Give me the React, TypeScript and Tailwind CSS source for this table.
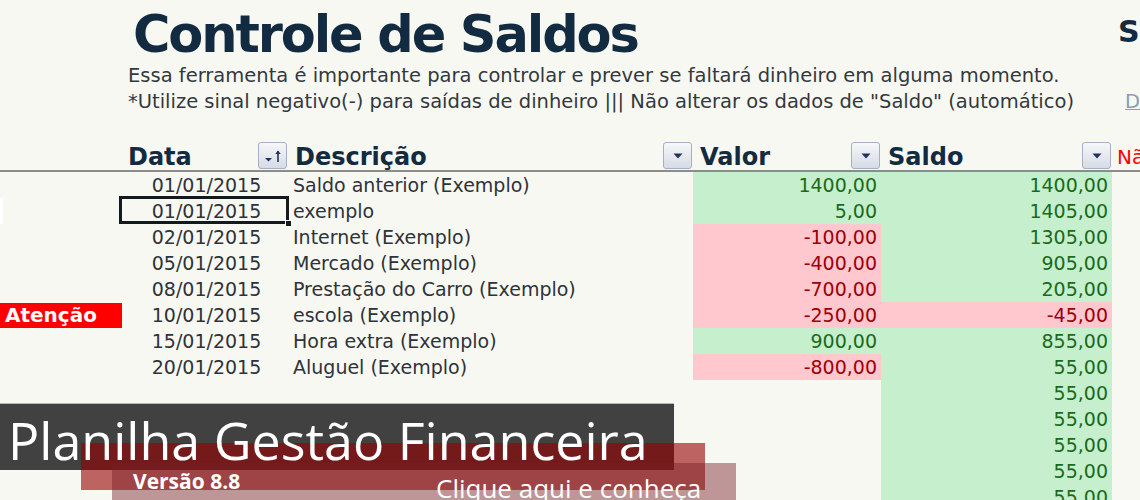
type Row = {
  date?: string;
  desc?: string;
  valor?: string;
  saldo: string;
  selected?: boolean;
  alert?: boolean;
  mark?: boolean;
};

const rows: Row[] = [
  { date: "01/01/2015", desc: "Saldo anterior (Exemplo)", valor: "1400,00", saldo: "1400,00" },
  { date: "01/01/2015", desc: "exemplo", valor: "5,00", saldo: "1405,00", selected: true, mark: true },
  { date: "02/01/2015", desc: "Internet (Exemplo)", valor: "-100,00", saldo: "1305,00" },
  { date: "05/01/2015", desc: "Mercado (Exemplo)", valor: "-400,00", saldo: "905,00" },
  { date: "08/01/2015", desc: "Prestação do Carro (Exemplo)", valor: "-700,00", saldo: "205,00" },
  { date: "10/01/2015", desc: "escola (Exemplo)", valor: "-250,00", saldo: "-45,00", alert: true },
  { date: "15/01/2015", desc: "Hora extra (Exemplo)", valor: "900,00", saldo: "855,00" },
  { date: "20/01/2015", desc: "Aluguel (Exemplo)", valor: "-800,00", saldo: "55,00" },
  { saldo: "55,00" },
  { saldo: "55,00" },
  { saldo: "55,00" },
  { saldo: "55,00" },
  { saldo: "55,00" },
];

const cols = "grid grid-cols-[120px_168px_405px_188px_231px_28px]";

function FilterButton({ sorted }: { sorted?: boolean }) {
  return (
    <div className="mb-[1px] flex h-[27px] w-[29px] shrink-0 items-center justify-center rounded-[3px] border border-[#a6b0c4] bg-gradient-to-b from-[#f6f7fa] to-[#d6dbe5]">
      {sorted ? (
        <svg width="20" height="16" viewBox="0 0 20 16">
          <path d="M2 10 L9 10 L5.5 13.5 Z" fill="#23335a" />
          <path d="M15 3 L15 14" stroke="#23335a" strokeWidth="1.6" />
          <path d="M12.3 6 L15 2.5 L17.7 6 Z" fill="#23335a" />
        </svg>
      ) : (
        <svg width="12" height="8" viewBox="0 0 12 8">
          <path d="M1.5 1.5 L10.5 1.5 L6 6.5 Z" fill="#23335a" />
        </svg>
      )}
    </div>
  );
}

function Money({ value }: { value?: string }) {
  if (!value) return <div />;
  const neg = value.startsWith("-");
  return (
    <div
      className={
        neg
          ? "bg-[#ffc7ce] pr-[4px] text-right text-[#9c0006]"
          : "bg-[#c6efce] pr-[4px] text-right text-[#1a6a1a]"
      }
    >
      {value}
    </div>
  );
}

export default function App() {
  return (
    <div className="relative h-[500px] w-[1140px] overflow-hidden bg-[#f8f8f3] font-['DejaVu_Sans',sans-serif] text-[#2e3338]">
      {/* title */}
      <div className="flex items-start pt-[6px]">
        <div className="w-[1118px] shrink-0 pl-[133px]">
          <h1 className="whitespace-nowrap text-[51px] font-bold leading-[57px] tracking-[-2.1px] text-[#122b40]">
            Controle de Saldos
          </h1>
        </div>
        <div className="mt-[8px] shrink-0 whitespace-nowrap text-[30px] font-bold leading-[35px] text-[#122b40]">
          Saldo
        </div>
      </div>

      {/* notes */}
      <div className="pl-[128px] text-[19.5px] leading-[26px] text-[#33383d]">
        <p className="whitespace-nowrap">
          Essa ferramenta é importante para controlar e prever se faltará dinheiro em alguma momento.
        </p>
        <div className="flex">
          <p className="w-[997px] shrink-0 whitespace-nowrap">
            *Utilize sinal negativo(-) para saídas de dinheiro ||| Não alterar os dados de "Saldo" (automático)
          </p>
          <span className="shrink-0 whitespace-nowrap text-[#8d9bb0] underline">Dúvidas</span>
        </div>
      </div>

      {/* header row */}
      <div className={`${cols} mt-[21px] h-[36px] border-b-2 border-[#8c8c8c] text-[24px] font-bold leading-[26px] text-[#122b40]`}>
        <div />
        <div className="flex items-end justify-between pl-[8px] pr-[1px]">
          <span>Data</span>
          <FilterButton sorted />
        </div>
        <div className="flex items-end justify-between pl-[7px] pr-[1px]">
          <span>Descrição</span>
          <FilterButton />
        </div>
        <div className="flex items-end justify-between pl-[7px] pr-[1px]">
          <span>Valor</span>
          <FilterButton />
        </div>
        <div className="flex items-end justify-between pl-[7px] pr-[1px]">
          <span>Saldo</span>
          <FilterButton />
        </div>
        <div className="flex items-end whitespace-nowrap pl-[5px] text-[20px] font-normal text-[#ff0000]">
          Não
        </div>
      </div>

      {/* data rows */}
      <div className="text-[19px] leading-[26px]">
        {rows.map((r, i) => (
          <div key={i} className={`${cols} h-[26px]`}>
            <div className="flex items-center">
              {r.mark && <div className="h-[26px] w-[3px] bg-white" />}
              {r.alert && (
                <div className="flex h-[25px] w-[122px] shrink-0 items-center bg-[#ff0000] pl-[5px] text-[20px] font-bold text-white">
                  Atenção
                </div>
              )}
            </div>
            <div className="relative pl-[5px] text-center">
              {r.date}
              {r.selected && (
                <>
                  <div className="absolute -inset-x-[1px] -top-[2px] bottom-0 border-[3px] border-[#121a20]" />
                  <div className="absolute bottom-[-3px] right-[-4px] h-[7px] w-[7px] border border-white bg-[#121a20]" />
                </>
              )}
            </div>
            <div className="whitespace-nowrap pl-[5px]">{r.desc}</div>
            <Money value={r.valor} />
            <Money value={r.saldo} />
            <div />
          </div>
        ))}
      </div>

      {/* banner overlay */}
      <div className="absolute left-0 top-[403px] h-[67px] w-[674px] border-t border-[#b8b8b0] bg-[#414141]" />
      <div className="absolute left-[81px] top-[443px] h-[47px] w-[624px] bg-[rgba(150,0,0,0.6)]" />
      <div className="absolute left-[112px] top-[463px] h-[37px] w-[624px] bg-[rgba(120,30,40,0.45)]" />
      <div className="absolute left-[8px] top-[414px] whitespace-nowrap font-['Open_Sans',sans-serif] text-[52px] leading-none text-white">
        Planilha Gestão Financeira
      </div>
      <div className="absolute left-[133px] top-[471px] whitespace-nowrap font-['Open_Sans',sans-serif] text-[21px] font-bold leading-none text-white">
        Versão 8.8
      </div>
      <div className="absolute left-[436px] top-[475px] whitespace-nowrap font-['Open_Sans',sans-serif] text-[26px] leading-none text-white">
        Clique aqui e conheça
      </div>
    </div>
  );
}
